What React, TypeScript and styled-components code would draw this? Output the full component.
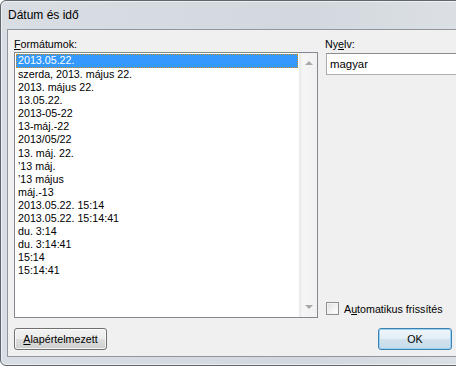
import React, { useState } from "react";
import styled, { createGlobalStyle, css } from "styled-components";

const GlobalStyle = createGlobalStyle`
  html, body {
    margin: 0;
    padding: 0;
    overflow: hidden;
    background: #ffffff;
  }
  body {
    font-family: "Liberation Sans", Arial, sans-serif;
  }
`;

const Window = styled.div`
  width: 560px;
  height: 366px;
  box-sizing: border-box;
  border: 1px solid #5f666d;
  border-radius: 6px 6px 0 6px;
  background: linear-gradient(to right, #d9dee4 0%, #d2d8de 55%, #e2e5e9 100%);
  box-shadow: inset 0 0 0 1px rgba(255, 255, 255, 0.55);
  padding: 0 6px 8px 6px;
  display: flex;
  flex-direction: column;
`;

const TitleBar = styled.div`
  height: 28px;
  display: flex;
  align-items: center;
  padding-left: 1px;
  font-size: 12px;
  color: #000;
`;

const Client = styled.div`
  flex: 1;
  background: #f0f0f0;
  border: 1px solid #8f969e;
  padding: 7px 6px 5px 6px;
  display: grid;
  grid-template-columns: 304px 1fr;
  grid-template-rows: 15px 266px 1fr;
  column-gap: 7px;
  font-size: 10.7px;
  color: #000;
`;

const Label = styled.label`
  line-height: 15px;
  white-space: nowrap;
  u {
    text-decoration: underline;
  }
`;

const ListBox = styled.div`
  border: 1px solid #828790;
  background: #fff;
  display: flex;
  overflow: hidden;
`;

const Items = styled.ul`
  flex: 1;
  list-style: none;
  margin: 0;
  padding: 1px 1px 0 1px;
`;

const Item = styled.li<{ $selected: boolean }>`
  height: 13.1px;
  line-height: 13px;
  padding-left: 2px;
  box-sizing: border-box;
  white-space: nowrap;
  cursor: default;
  ${({ $selected }) =>
    $selected &&
    css`
      background: #3399ff;
      color: #fff;
      outline: 1px dotted #d08c1c;
      outline-offset: -1px;
      height: 14px;
    `}
`;

const ScrollBar = styled.div`
  width: 17px;
  background: linear-gradient(to right, #e9e9e9 0px, #f6f6f6 2px, #f1f1f1 100%);
  border-left: 1px solid #ececec;
  display: flex;
  flex-direction: column;
  justify-content: space-between;
  align-items: center;
  padding: 8px 0 8px;
`;

const Arrow = styled.div<{ $down?: boolean }>`
  width: 0;
  height: 0;
  border-left: 4px solid transparent;
  border-right: 4px solid transparent;
  ${({ $down }) =>
    $down
      ? css`
          border-top: 4px solid #a9a9a9;
        `
      : css`
          border-bottom: 4px solid #a9a9a9;
        `}
`;

const RightColumn = styled.div`
  display: flex;
  flex-direction: column;
  justify-content: space-between;
  padding-left: 1px;
`;

const TextInput = styled.div`
  height: 22px;
  box-sizing: border-box;
  border: 1px solid #abadb3;
  border-top-color: #8a8d94;
  background: #fff;
  display: flex;
  align-items: center;
  padding-left: 3px;
  margin-top: 1px;
  font-size: 11.4px;
`;

const CheckRow = styled.label`
  display: flex;
  align-items: center;
  gap: 5px;
  margin-bottom: 3px;
  white-space: nowrap;
  u {
    text-decoration: underline;
  }
`;

const CheckBox = styled.span`
  width: 13px;
  height: 13px;
  box-sizing: border-box;
  border: 1px solid #8f8f8f;
  background: linear-gradient(135deg, #dcdcdc 0%, #f5f5f5 60%, #ffffff 100%);
  box-shadow: inset 0 0 0 1px #f4f4f4;
`;

const ButtonRow = styled.div`
  grid-column: 1 / span 2;
  display: flex;
  align-items: flex-end;
  gap: 271px;
  padding-bottom: 1px;
`;

const Button = styled.button<{ $default?: boolean; $width: number }>`
  width: ${({ $width }) => $width}px;
  height: 22px;
  box-sizing: border-box;
  border: 1px solid #707070;
  border-radius: 3px;
  background: linear-gradient(to bottom, #f2f2f2 0%, #ebebeb 50%, #dddddd 51%, #cfcfcf 100%);
  box-shadow: inset 0 0 0 1px rgba(255, 255, 255, 0.75);
  font-family: "Liberation Sans", Arial, sans-serif;
  font-size: 10.7px;
  color: #000;
  padding: 0;
  u {
    text-decoration: underline;
  }
  ${({ $default }) =>
    $default &&
    css`
      border-color: #3c7fb1;
      box-shadow: inset 0 0 0 1px #97d5f2;
      background: linear-gradient(to bottom, #eef6fb 0%, #e3eef6 50%, #d2e3ee 51%, #c6dbe9 100%);
    `}
`;

const formats = [
  "2013.05.22.",
  "szerda, 2013. május 22.",
  "2013. május 22.",
  "13.05.22.",
  "2013-05-22",
  "13-máj.-22",
  "2013/05/22",
  "13. máj. 22.",
  "’13 máj.",
  "’13 május",
  "máj.-13",
  "2013.05.22. 15:14",
  "2013.05.22. 15:14:41",
  "du. 3:14",
  "du. 3:14:41",
  "15:14",
  "15:14:41"
];

export default function App() {
  const [selected, setSelected] = useState(0);

  return (
    <>
      <GlobalStyle />
      <Window>
        <TitleBar>Dátum és idő</TitleBar>
        <Client>
          <Label>
            <u>F</u>ormátumok:
          </Label>
          <Label>
            Ny<u>e</u>lv:
          </Label>
          <ListBox>
            <Items>
              {formats.map((f, i) => (
                <Item key={f} $selected={i === selected} onClick={() => setSelected(i)}>
                  {f}
                </Item>
              ))}
            </Items>
            <ScrollBar>
              <Arrow />
              <Arrow $down />
            </ScrollBar>
          </ListBox>
          <RightColumn>
            <TextInput>magyar</TextInput>
            <CheckRow>
              <CheckBox />
              <span>
                A<u>u</u>tomatikus frissítés
              </span>
            </CheckRow>
          </RightColumn>
          <ButtonRow>
            <Button $width={93}>
              <u>A</u>lapértelmezett
            </Button>
            <Button $default $width={74}>
              OK
            </Button>
          </ButtonRow>
        </Client>
      </Window>
    </>
  );
}
